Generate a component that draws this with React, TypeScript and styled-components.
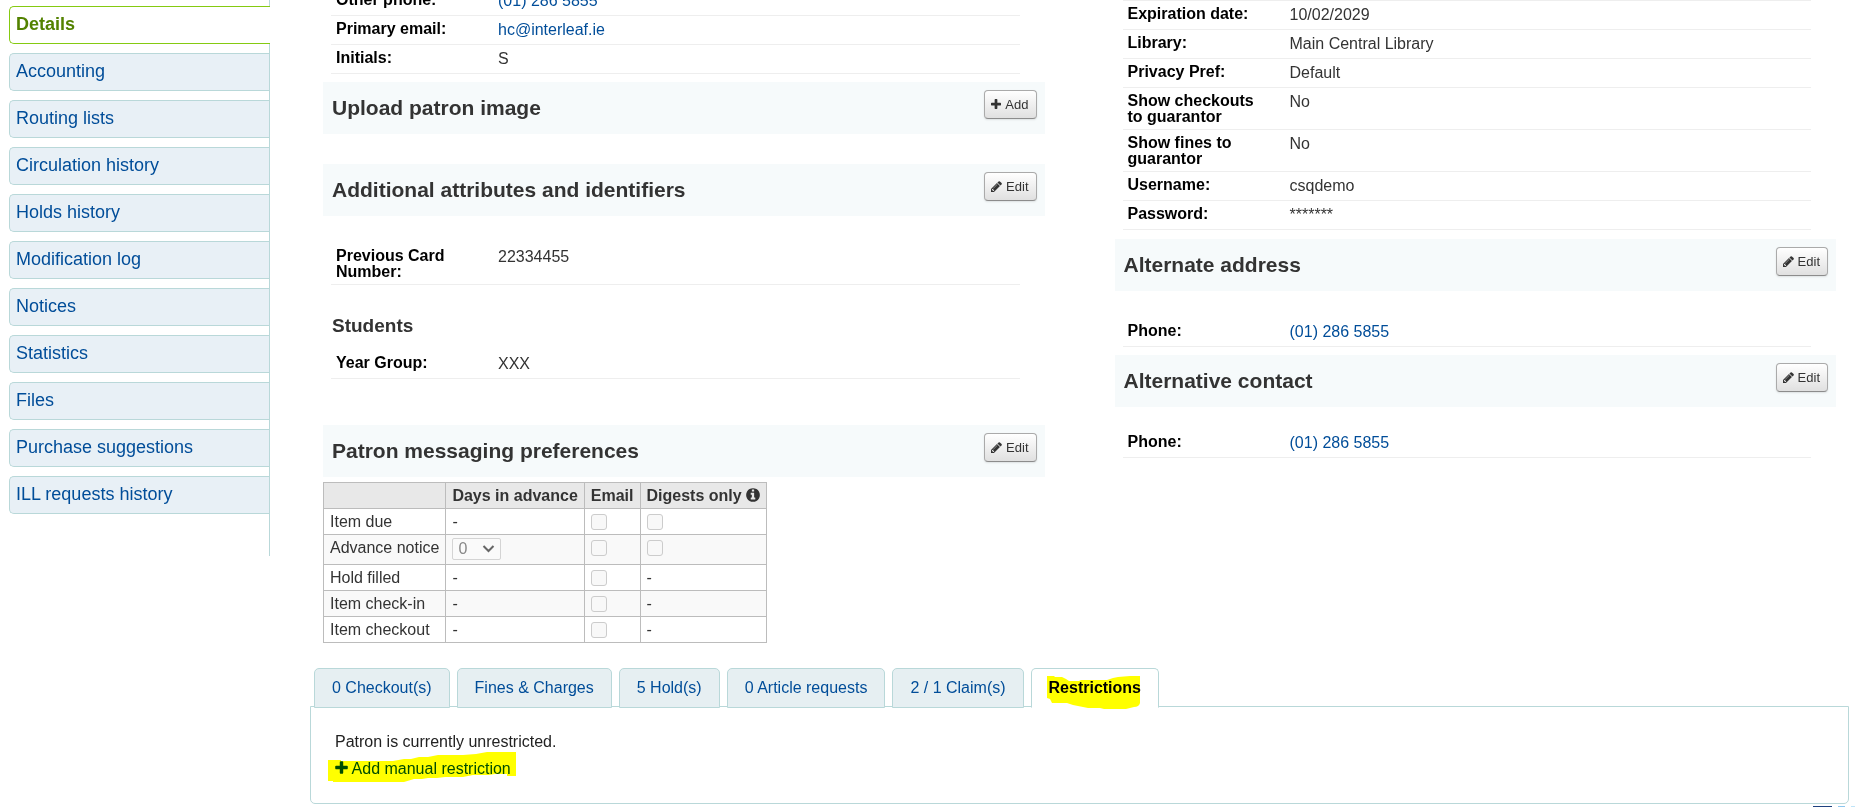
import React from "react";
import styled, { createGlobalStyle, css } from "styled-components";

const GlobalStyle = createGlobalStyle`
  * { box-sizing: border-box; }
  body {
    margin: 0;
    background: #fff;
    color: #333;
    font: 16px/20px "Liberation Sans", Arial, sans-serif;
  }
  a { color: #004d99; text-decoration: none; }
`;

const Page = styled.div`
  display: flex;
  align-items: flex-start;
  gap: 40px;
  padding-right: 10px;
  overflow: hidden;
`;

const Sidebar = styled.nav`
  flex: 0 0 270px;
  padding: 6px 0 42px 9px;
  border-right: 1px solid #b9d8d9;
`;

const Menu = styled.ul`
  display: flex;
  flex-direction: column;
  gap: 9px;
  list-style: none;
  margin: 0;
  padding: 0;
`;

const MenuLink = styled.a<{ $active?: boolean }>`
  display: block;
  padding: 7px 5px 9px 6px;
  border: 1px solid #b9d8d9;
  border-right: 0;
  border-radius: 5px 0 0 5px;
  background: #e8f0f6;
  font-size: 18px;
  line-height: 20px;
  ${(p) =>
    p.$active &&
    css`
      margin-right: -1px;
      border-color: #85ca11;
      background: #fff;
      color: #538200;
      font-weight: bold;
    `}
`;

const Main = styled.main`
  flex: 1;
  min-width: 0;
`;

const Columns = styled.div`
  display: grid;
  grid-template-columns: 1fr 1fr;
  align-items: start;
  gap: 70px;
  padding: 0 13px;
`;

const Column = styled.div<{ $scrolled?: boolean }>`
  margin-top: ${(p) => (p.$scrolled ? "-13px" : "0")};
`;

const SectionHead = styled.header<{ $gap: number }>`
  display: flex;
  justify-content: space-between;
  align-items: flex-start;
  margin-top: ${(p) => p.$gap}px;
  padding: 8px 8px 12px 9px;
  min-height: 52px;
  background: #f6fafb;
`;

const Title = styled.h3`
  margin: 4px 0 0;
  font-size: 21px;
  line-height: 28px;
`;

const SubTitle = styled.h4`
  margin: 30px 9px 14px;
  font-size: 19px;
  line-height: 21px;
`;

const HeadButton = styled.button`
  display: inline-flex;
  align-items: center;
  gap: 4px;
  height: 29px;
  padding: 0 7px 0 6px;
  border: 1px solid #aaa;
  border-bottom-color: #8c8c8c;
  border-radius: 4px;
  background: linear-gradient(#fff, #e0e0e0);
  box-shadow: 0 1px 2px rgba(0, 0, 0, 0.1);
  color: #333;
  font: 13px/18px "Liberation Sans", Arial, sans-serif;
`;

const Rows = styled.dl<{ $gap?: number; $topLine?: boolean }>`
  margin: ${(p) => p.$gap ?? 0}px 25px 0 8px;
  border-top: ${(p) => (p.$topLine ? "1px solid #eee" : "0")};
`;

const Row = styled.div`
  display: grid;
  grid-template-columns: 140px 1fr;
  column-gap: 22px;
  padding: 4px 4px 4px 5px;
  border-bottom: 1px solid #eee;
`;

const Label = styled.dt`
  padding-top: 1px;
  color: #000;
  font-weight: bold;
  line-height: 16px;
`;

const Value = styled.dd`
  margin: 0;
`;

const Prefs = styled.table`
  margin-top: 5px;
  border-collapse: collapse;
  th,
  td {
    border: 1px solid #bcbcbc;
    padding: 3px 6px 2px;
    height: 26px;
    text-align: left;
    vertical-align: top;
    font-weight: normal;
  }
  thead th {
    background: #e8e8e8;
    font-weight: bold;
    white-space: nowrap;
  }
  tbody tr:nth-child(even) {
    background: #f9f9f9;
  }
`;

const Check = styled.input`
  appearance: none;
  display: block;
  width: 16px;
  height: 16px;
  margin: 2px 0;
  border: 1px solid #ccc;
  border-radius: 3px;
  background: #f8f8f8;
`;

const DaysBox = styled.span`
  display: grid;
  width: 49px;
  height: 22px;
  margin-bottom: 2px;
  align-items: center;
`;

const Days = styled.select`
  appearance: none;
  grid-area: 1 / 1;
  height: 22px;
  padding: 0 5px;
  border: 1px solid #d4d4d4;
  border-radius: 2px;
  background: #fafafa;
  color: #888;
  font: 16px/20px "Liberation Sans", Arial, sans-serif;
  opacity: 1;
`;

const Chevron = styled.svg`
  grid-area: 1 / 1;
  justify-self: end;
  margin-right: 6px;
  pointer-events: none;
`;

const Tabs = styled.div`
  position: relative;
  display: flex;
  gap: 7px;
  margin: 25px 4px -2px;
`;

const Tab = styled.button<{ $active?: boolean }>`
  height: 40px;
  padding: 0 17px;
  border: 1px solid #b9d8d9;
  border-radius: 5px 5px 0 0;
  background: #e6eff2;
  color: #004d99;
  font: 16px/20px "Liberation Sans", Arial, sans-serif;
  ${(p) =>
    p.$active &&
    css`
      border-bottom-color: #fff;
      background: #fff;
      color: #000;
      font-weight: bold;
    `}
`;

const Panel = styled.section`
  padding: 25px 24px 23px;
  border: 1px solid #b9d8d9;
  border-radius: 0 0 5px 5px;
  min-height: 98px;
`;

const Message = styled.p`
  margin: 0 0 7px;
  color: #222;
`;

const Marked = styled.span`
  position: relative;
`;

const Marker = styled.svg`
  position: absolute;
  mix-blend-mode: multiply;
  pointer-events: none;
  fill: #ff0;
`;

const TabMarker = styled(Marker)`
  top: -3px;
  left: -2px;
`;

const LinkMarker = styled(Marker)`
  top: -8px;
  left: -7px;
`;

const FooterEdge = styled.div`
  display: flex;
  gap: 6px;
  justify-content: flex-end;
  margin: 2px -6px 0 0;
  height: 1px;
`;

const Swatch = styled.span<{ $color: string; $width: number }>`
  width: ${(p) => p.$width}px;
  background: ${(p) => p.$color};
`;

const Glyph = styled.svg`
  flex: none;
  vertical-align: -2px;
  fill: currentColor;
`;

const paths = {
  pencil:
    "M491 1536l91-91-235-235-91 91v107h128v128h107zm523-928q0-22-22-22-10 0-17 7l-542 542q-7 7-7 17 0 22 22 22 10 0 17-7l542-542q7-7 7-17zm-54-192l416 416-832 832h-416v-416zm683 96q0 53-37 90l-166 166-416-416 166-165q36-38 90-38 53 0 91 38l235 234q37 39 37 91z",
  plus: "M1408 736v192q0 40-28 68t-68 28h-416v416q0 40-28 68t-68 28h-192q-40 0-68-28t-28-68v-416h-416q-40 0-68-28t-28-68v-192q0-40 28-68t68-28h416v-416q0-40 28-68t68-28h192q40 0 68 28t28 68v416h416q40 0 68 28t28 68z",
  info: "M1024 1376v-160q0-14-9-23t-23-9h-96v-512q0-14-9-23t-23-9h-320q-14 0-23 9t-9 23v160q0 14 9 23t23 9h96v320h-96q-14 0-23 9t-9 23v160q0 14 9 23t23 9h448q14 0 23-9t9-23zm-128-896v-160q0-14-9-23t-23-9h-192q-14 0-23 9t-9 23v160q0 14 9 23t23 9h192q14 0 23-9t9-23zm640 416q0 209-103 385.5t-279.5 279.5-385.5 103-385.5-103-279.5-279.5-103-385.5 103-385.5 279.5-279.5 385.5-103 385.5 103 279.5 279.5 103 385.5z",
};

const boxes = { pencil: [128, 1536], plus: [0, 1408], info: [0, 1536] };

function Icon({ name, size }: { name: keyof typeof paths; size: number }) {
  const [left, width] = boxes[name];
  return (
    <Glyph
      width={Math.round((size * width) / 1792)}
      height={size}
      viewBox={`${left} 0 ${width} 1792`}
      aria-hidden="true"
    >
      <path d={paths[name]} />
    </Glyph>
  );
}

function Section({ title, action, gap }: { title: string; action: "Add" | "Edit"; gap: number }) {
  return (
    <SectionHead $gap={gap}>
      <Title>{title}</Title>
      <HeadButton type="button">
        <Icon name={action === "Add" ? "plus" : "pencil"} size={13} />
        {action}
      </HeadButton>
    </SectionHead>
  );
}

type Field = { label: string; value: string; href?: string };

function Fields({ items, gap, topLine }: { items: Field[]; gap?: number; topLine?: boolean }) {
  return (
    <Rows $gap={gap} $topLine={topLine}>
      {items.map((f) => (
        <Row key={f.label}>
          <Label>{f.label}</Label>
          <Value>{f.href ? <a href={f.href}>{f.value}</a> : f.value}</Value>
        </Row>
      ))}
    </Rows>
  );
}

const menu = [
  "Details",
  "Accounting",
  "Routing lists",
  "Circulation history",
  "Holds history",
  "Modification log",
  "Notices",
  "Statistics",
  "Files",
  "Purchase suggestions",
  "ILL requests history",
];

const phone = { value: "(01) 286 5855", href: "tel:012865855" };

const contact: Field[] = [
  { label: "Other phone:", ...phone },
  { label: "Primary email:", value: "hc@interleaf.ie", href: "mailto:hc@interleaf.ie" },
  { label: "Initials:", value: "S" },
];

const library: Field[] = [
  { label: "Expiration date:", value: "10/02/2029" },
  { label: "Library:", value: "Main Central Library" },
  { label: "Privacy Pref:", value: "Default" },
  { label: "Show checkouts to guarantor", value: "No" },
  { label: "Show fines to guarantor", value: "No" },
  { label: "Username:", value: "csqdemo" },
  { label: "Password:", value: "*******" },
];

const notices = [
  { name: "Item due", days: false, digest: true },
  { name: "Advance notice", days: true, digest: true },
  { name: "Hold filled", days: false, digest: false },
  { name: "Item check-in", days: false, digest: false },
  { name: "Item checkout", days: false, digest: false },
];

const tabs = ["0 Checkout(s)", "Fines & Charges", "5 Hold(s)", "0 Article requests", "2 / 1 Claim(s)"];

export default function App() {
  return (
    <>
      <GlobalStyle />
      <Page>
        <Sidebar>
          <Menu>
            {menu.map((item, i) => (
              <li key={item}>
                <MenuLink href="#" $active={i === 0}>
                  {item}
                </MenuLink>
              </li>
            ))}
          </Menu>
        </Sidebar>
        <Main>
          <Columns>
            <Column $scrolled>
              <Fields items={contact} />
              <Section title="Upload patron image" action="Add" gap={8} />
              <Section title="Additional attributes and identifiers" action="Edit" gap={30} />
              <Fields items={[{ label: "Previous Card Number:", value: "22334455" }]} gap={27} />
              <SubTitle>Students</SubTitle>
              <Fields items={[{ label: "Year Group:", value: "XXX" }]} />
              <Section title="Patron messaging preferences" action="Edit" gap={46} />
              <Prefs>
                <thead>
                  <tr>
                    <th />
                    <th scope="col">Days in advance</th>
                    <th scope="col">Email</th>
                    <th scope="col">
                      Digests only <Icon name="info" size={16} />
                    </th>
                  </tr>
                </thead>
                <tbody>
                  {notices.map((n) => (
                    <tr key={n.name}>
                      <th scope="row">{n.name}</th>
                      <td>
                        {n.days ? (
                          <DaysBox>
                            <Days disabled aria-label="Days in advance" defaultValue="0">
                              <option>0</option>
                            </Days>
                            <Chevron width="13" height="8" viewBox="0 0 13 8" fill="none" stroke="#666" strokeWidth="2">
                              <path d="M1.5 1l5 5 5-5" />
                            </Chevron>
                          </DaysBox>
                        ) : (
                          "-"
                        )}
                      </td>
                      <td>
                        <Check type="checkbox" disabled aria-label={`${n.name} by email`} />
                      </td>
                      <td>
                        {n.digest ? <Check type="checkbox" disabled aria-label={`${n.name} digest only`} /> : "-"}
                      </td>
                    </tr>
                  ))}
                </tbody>
              </Prefs>
            </Column>
            <Column>
              <Fields items={library} topLine />
              <Section title="Alternate address" action="Edit" gap={9} />
              <Fields items={[{ label: "Phone:", ...phone }]} gap={27} />
              <Section title="Alternative contact" action="Edit" gap={8} />
              <Fields items={[{ label: "Phone:", ...phone }]} gap={22} />
            </Column>
          </Columns>
          <Tabs role="tablist">
            {tabs.map((t) => (
              <Tab key={t} type="button" role="tab" aria-selected="false">
                {t}
              </Tab>
            ))}
            <Tab type="button" role="tab" aria-selected="true" $active>
              <Marked>
                Restrictions
                <TabMarker width="94" height="34" viewBox="0 0 94 34" aria-hidden="true">
                  <path d="M0 0h7l1 1h7l4 2 3 2h10l2-1h26l6-2 5-1 12-1h10v27q-1 4-6 4l-8 2H57l-4-1H41l-15-3-6-2H5l-2-4-3-1z" />
                </TabMarker>
              </Marked>
            </Tab>
          </Tabs>
          <Panel>
            <Message>Patron is currently unrestricted.</Message>
            <Marked>
              <a href="#">
                <Icon name="plus" size={16} /> Add manual restriction
              </a>
              <LinkMarker width="188" height="30" viewBox="0 0 188 30" aria-hidden="true">
                <path d="M0 8h13v1h52l11-2h7l8-2h9l10-2h25l13-1 11-2h29v24h-9v-2h-12l-6 1h-16l-10 2h-18l-8 1h-9l-6 1h-8l-10 3H5v-1H0z" />
              </LinkMarker>
            </Marked>
          </Panel>
          <FooterEdge>
            <Swatch $color="#1f4280" $width={19} />
            <Swatch $color="#8cc6ee" $width={7} />
            <Swatch $color="#bfe4f8" $width={4} />
          </FooterEdge>
        </Main>
      </Page>
    </>
  );
}
